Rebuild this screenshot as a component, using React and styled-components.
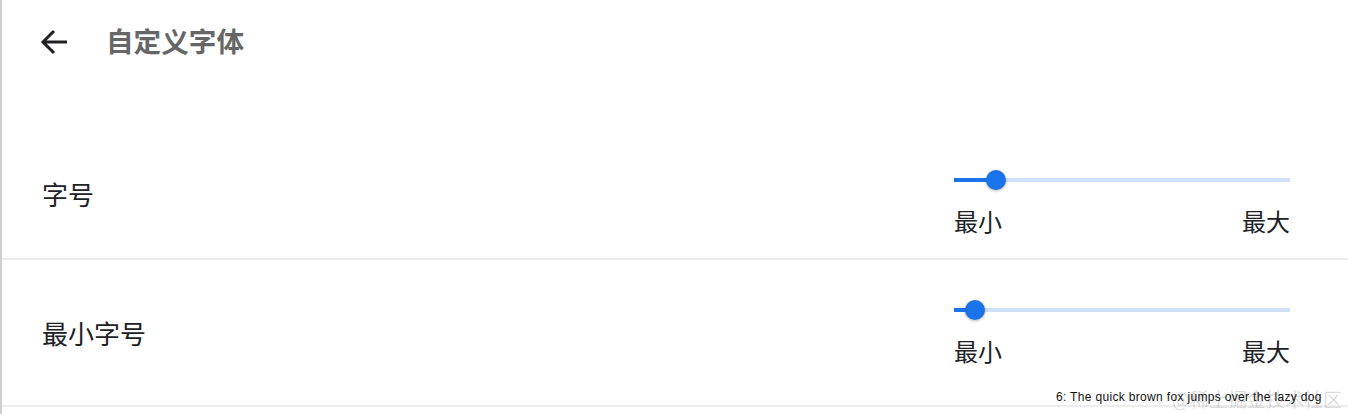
import React from "react";
import styled, { createGlobalStyle } from "styled-components";

const GlobalStyle = createGlobalStyle`
  html, body {
    margin: 0;
    padding: 0;
    background: #fff;
  }
  body {
    font-family: "Roboto", "Noto Sans CJK SC", sans-serif;
  }
`;

const Page = styled.div`
  position: relative;
  width: 1348px;
  height: 414px;
  box-sizing: border-box;
  border-left: 2px solid #cfcfcf;
  overflow: hidden;
`;

const Header = styled.header`
  display: flex;
  align-items: center;
  height: 84px;
  padding-left: 38px;
`;

const BackIcon = styled.svg`
  width: 28px;
  height: 28px;
  display: block;
  fill: none;
  stroke: #202124;
  stroke-width: 3;
`;

const Title = styled.h1`
  margin: 0 0 4px 38px;
  font-family: "Noto Sans CJK SC", sans-serif;
  font-size: 27.6px;
  font-weight: 700;
  line-height: 36px;
  color: #666;
`;

const Row = styled.section`
  display: flex;
  justify-content: space-between;
  height: ${(p) => p.$height}px;
  box-sizing: border-box;
  padding: 0 58px 0 40px;
  border-bottom: 2px solid #ececec;
`;

const Label = styled.div`
  font-family: "Noto Sans CJK SC", sans-serif;
  font-size: 26px;
  line-height: 36px;
  color: #202124;
  margin-top: ${(p) => p.$top}px;
`;

const SliderBox = styled.div`
  width: 336px;
`;

const Track = styled.div`
  position: relative;
  height: 4px;
  margin-top: ${(p) => p.$top}px;
  background: #cfe0f8;
`;

const Fill = styled.div`
  height: 100%;
  background: #1a73e8;
`;

const Thumb = styled.div`
  position: absolute;
  top: -8px;
  width: 20px;
  height: 20px;
  margin-left: -10px;
  border-radius: 50%;
  background: #1a73e8;
  box-shadow: 0 1px 3px rgba(60, 64, 67, 0.4);
`;

const Ends = styled.div`
  display: flex;
  justify-content: space-between;
  margin-top: 21px;
  font-family: "Noto Sans CJK SC", sans-serif;
  font-size: 24px;
  line-height: 36px;
  color: #202124;
`;

const Watermark = styled.div`
  position: absolute;
  right: 6px;
  bottom: 2px;
  font-family: "Noto Sans CJK SC", sans-serif;
  font-size: 19px;
  line-height: 26px;
  color: rgba(130, 130, 130, 0.28);
  white-space: nowrap;
`;

const Caption = styled.div`
  position: absolute;
  left: 1054px;
  top: 389px;
  font-family: "Liberation Sans", Arial, sans-serif;
  font-size: 12px;
  line-height: 16px;
  letter-spacing: 0.33px;
  color: #111;
  white-space: nowrap;
`;

function Slider({ percent, top }) {
  return (
    <SliderBox>
      <Track $top={top}>
        <Fill style={{ width: `${percent}%` }} />
        <Thumb style={{ left: `${percent}%` }} />
      </Track>
      <Ends>
        <span>最小</span>
        <span>最大</span>
      </Ends>
    </SliderBox>
  );
}

export default function App() {
  return (
    <>
      <GlobalStyle />
      <Page>
        <Header>
          <BackIcon viewBox="0 0 28 28">
            <path d="M27 14H3M14 3 3 14l11 11" />
          </BackIcon>
          <Title>自定义字体</Title>
        </Header>
        <Row $height={176}>
          <Label $top={92}>字号</Label>
          <Slider percent={12.4} top={94} />
        </Row>
        <Row $height={147}>
          <Label $top={55}>最小字号</Label>
          <Slider percent={6.2} top={48} />
        </Row>
        <Watermark>@稀土掘金技术社区</Watermark>
        <Caption>6: The quick brown fox jumps over the lazy dog</Caption>
      </Page>
    </>
  );
}
